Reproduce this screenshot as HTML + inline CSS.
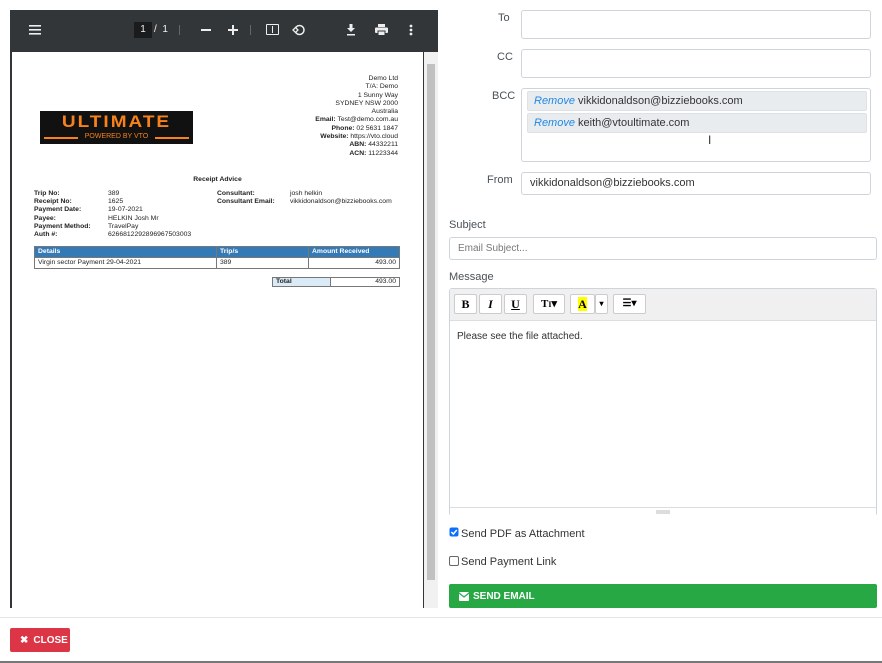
<!DOCTYPE html>
<html><head><style>
*{box-sizing:border-box;margin:0;padding:0}
body{width:882px;height:663px;background:#fff;font-family:"Liberation Sans",sans-serif;position:relative;overflow:hidden;color:#495057}
.a{position:absolute}
.pdf{left:10px;top:10px;width:428px;height:598px;background:#323639}
.tb{left:0;top:0;width:428px;height:42px;background:#323639;color:#f1f1f1}
.page{left:2px;top:42px;width:411px;height:556px;background:#fff;color:#222;font-size:6.8px;line-height:8.2px}
.sb{left:414px;top:42px;width:14px;height:556px;background:#f1f1f1}
.lbl{font-size:11px;color:#495057}
.inp{border:1px solid #ced4da;border-radius:3px;background:#fff}
.tag{left:5px;width:340px;height:20px;background:#e9ecef;border:1px solid #dee2e6;border-radius:2px;font-size:11px;color:#333;line-height:18px;padding-left:6px}
.tag i{color:#1e88e5}
.btn{border:1px solid #ccc;background:#fff;border-radius:2px;height:20px;top:5px;font-size:12px;text-align:center;line-height:18px;color:#000;font-family:"Liberation Serif",serif;font-weight:bold}
td{border:1px solid #777;padding:0 3px}
table{border-collapse:collapse}
.fb{display:flex;align-items:center;color:#fff;font-size:10px;font-weight:bold;border-radius:2px}
</style></head><body>
<div class="a pdf">
 <div class="a tb">
  <svg class="a" style="left:19px;top:15px" width="12" height="10"><rect y="0" width="12" height="1.6" fill="#eee"/><rect y="4" width="12" height="1.6" fill="#eee"/><rect y="8" width="12" height="1.6" fill="#eee"/></svg>
  <div class="a" style="left:124px;top:12px;width:18px;height:16px;background:#191b1c;font-size:10px;line-height:16px;text-align:center">1</div>
  <div class="a" style="left:144px;top:12px;font-size:10px;line-height:16px">/ &nbsp;1</div>
  <div class="a" style="left:169px;top:15px;width:1px;height:10px;background:#666"></div>
  <div class="a" style="left:191px;top:19px;width:10px;height:1.6px;background:#eee"></div>
  <div class="a" style="left:218px;top:19px;width:10px;height:1.6px;background:#eee"></div>
  <div class="a" style="left:222.2px;top:15px;width:1.6px;height:10px;background:#eee"></div>
  <div class="a" style="left:240px;top:15px;width:1px;height:10px;background:#666"></div>
  <div class="a" style="left:256px;top:14px;width:13px;height:11px;border:1.5px solid #eee;border-radius:1px"></div>
  <div class="a" style="left:261.7px;top:16px;width:1.6px;height:7px;background:#eee"></div>
  <svg class="a" style="left:282px;top:13px" width="14" height="14"><circle cx="7.5" cy="7" r="4.5" fill="none" stroke="#eee" stroke-width="1.5"/><rect x="1" y="5" width="4" height="4" fill="#323639" transform="rotate(45 3 7)"/><path d="M1 7 L3.5 4.5 L6 7 L3.5 9.5Z" fill="none" stroke="#eee" stroke-width="1.3"/></svg>
  <svg class="a" style="left:336px;top:13px" width="10" height="13"><path d="M3.5 1h3v4h2.5L5 9 1 5h2.5z M1 11h8v1.5H1z" fill="#eee"/></svg>
  <svg class="a" style="left:365px;top:14px" width="13" height="12"><rect x="3" y="0" width="7" height="3" fill="#eee"/><rect x="0" y="3.5" width="13" height="5.5" rx="1" fill="#eee"/><rect x="3" y="7" width="7" height="4.5" fill="#eee" stroke="#323639" stroke-width="1"/></svg>
  <svg class="a" style="left:399px;top:14px" width="4" height="12"><circle cx="2" cy="2" r="1.4" fill="#eee"/><circle cx="2" cy="6" r="1.4" fill="#eee"/><circle cx="2" cy="10" r="1.4" fill="#eee"/></svg>
 </div>
 <div class="a page">
  <div class="a" style="left:28px;top:59px;width:153px;height:33px;background:#111">
   <div class="a" style="left:3px;top:3px;width:147px;height:17px;font-size:19px;line-height:17px;font-weight:bold;color:#f7821b;letter-spacing:2px;text-align:center;transform:scaleY(0.85)">ULTIMATE</div>
   <div class="a" style="left:4px;top:26px;width:145px;height:1.5px;background:#f7821b"></div>
   <div class="a" style="left:38px;top:22px;width:77px;background:#111;font-size:7px;line-height:8px;color:#f7821b;text-align:center">POWERED BY VTO</div>
  </div>
  <div class="a" style="right:25px;top:23px;text-align:right;line-height:8.3px">Demo Ltd<br>T/A: Demo<br>1 Sunny Way<br>SYDNEY NSW 2000<br>Australia<br><b>Email:</b> Test@demo.com.au<br><b>Phone:</b> 02 5631 1847<br><b>Website:</b> https://vto.cloud<br><b>ABN:</b> 44332211<br><b>ACN:</b> 11223344</div>
  <div class="a" style="left:0;width:411px;top:124px;text-align:center;font-weight:bold">Receipt Advice</div>
  <div class="a" style="left:22px;top:138px;font-weight:bold">Trip No:<br>Receipt No:<br>Payment Date:<br>Payee:<br>Payment Method:<br>Auth #:</div>
  <div class="a" style="left:96px;top:138px">389<br>1625<br>19-07-2021<br>HELKIN Josh Mr<br>TravelPay<br>6266812292896967503003</div>
  <div class="a" style="left:205px;top:138px;font-weight:bold">Consultant:<br>Consultant Email:</div>
  <div class="a" style="left:278px;top:138px">josh helkin<br>vikkidonaldson@bizziebooks.com</div>
  <table class="a" style="left:22px;top:194px;width:366px;line-height:10px">
   <tr style="background:#337ab7;color:#fff;font-weight:bold"><td style="width:182px">Details</td><td style="width:92px">Trip/s</td><td>Amount Received</td></tr>
   <tr><td>Virgin sector Payment 29-04-2021</td><td>389</td><td style="text-align:right">493.00</td></tr>
  </table>
  <table class="a" style="left:260px;top:225px;width:128px;line-height:8px">
   <tr><td style="background:#dbeaf7;font-weight:bold;width:58px">Total</td><td style="text-align:right">493.00</td></tr>
  </table>
 </div>
 <div class="a sb"><div class="a" style="left:3px;top:12px;width:8px;height:516px;background:#c1c1c1"></div></div>
</div>

<div class="a lbl" style="left:498px;top:12px">To</div>
<div class="a inp" style="left:521px;top:10px;width:350px;height:29px"></div>
<div class="a lbl" style="left:497px;top:51px">CC</div>
<div class="a inp" style="left:521px;top:49px;width:350px;height:29px"></div>
<div class="a lbl" style="left:492px;top:90px">BCC</div>
<div class="a inp" style="left:521px;top:88px;width:350px;height:74px">
 <div class="a tag" style="top:2px">
  <i>Remove</i> vikkidonaldson@bizziebooks.com</div>
 <div class="a tag" style="top:24px"><i>Remove</i> keith@vtoultimate.com</div>
 <div class="a" style="left:186px;top:44px;font-size:12px;color:#333">I</div>
</div>
<div class="a lbl" style="left:487px;top:174px">From</div>
<div class="a inp" style="left:521px;top:172px;width:350px;height:23px;font-size:11px;color:#333;line-height:21px;padding-left:8px">vikkidonaldson@bizziebooks.com</div>

<div class="a lbl" style="left:449px;top:219px">Subject</div>
<div class="a inp" style="left:449px;top:237px;width:428px;height:23px;font-size:10px;color:#777;line-height:21px;padding-left:8px">Email Subject...</div>
<div class="a lbl" style="left:449px;top:271px">Message</div>
<div class="a inp" style="left:449px;top:288px;width:428px;height:228px;background:#fff">
 <div class="a" style="left:0;top:0;width:426px;height:32px;background:#f0f0f0;border-bottom:1px solid #ddd"></div>
 <div class="a btn" style="left:4px;width:23px">B</div>
 <div class="a btn" style="left:29px;width:23px;font-style:italic">I</div>
 <div class="a btn" style="left:54px;width:23px;text-decoration:underline">U</div>
 <div class="a btn" style="left:83px;width:32px;font-size:11px">T<span style="font-size:8px">I</span>▾</div>
 <div class="a btn" style="left:120px;width:25px"><span style="background:#ff0">A</span></div>
 <div class="a btn" style="left:145px;width:13px;font-size:8px">▾</div>
 <div class="a btn" style="left:163px;width:33px;font-size:10px">☰▾</div>
 <div class="a" style="left:7px;top:42px;font-size:10px;color:#333">Please see the file attached.</div>
 <div class="a" style="left:0;top:218px;width:426px;height:9px;border-top:1px solid #ddd;background:#fff"><div class="a" style="left:206px;top:2px;width:14px;height:4px;background:#ddd"></div></div>
</div>
<svg class="a" style="left:449px;top:527px" width="10" height="10"><rect x=".5" y=".5" width="9" height="9" rx="2" fill="#0d6efd"/><path d="M2.3 5l2 2 3.5-4" fill="none" stroke="#fff" stroke-width="1.5"/></svg>
<div class="a lbl" style="left:461px;top:528px;color:#333">Send PDF as Attachment</div>
<div class="a" style="left:449px;top:556px;width:10px;height:10px;border:1px solid #666;border-radius:2px"></div>
<div class="a lbl" style="left:461px;top:556px;color:#333">Send Payment Link</div>
<div class="a fb" style="left:449px;top:584px;width:428px;height:24px;background:#28a745;padding-left:10px">
<svg width="10" height="9" style="margin-right:4px"><rect width="10" height="9" rx="1" fill="#fff"/><path d="M0 1l5 4 5-4" fill="none" stroke="#28a745" stroke-width="1.2"/></svg>SEND EMAIL</div>
<div class="a" style="left:0;top:617px;width:882px;height:1px;background:#e5e5e5"></div>
<div class="a fb" style="left:10px;top:628px;width:60px;height:24px;background:#dc3545;padding-left:10px"><span style="margin-right:5px">✖</span>CLOSE</div>
<div class="a" style="left:0;top:661px;width:882px;height:2px;background:#777"></div>
</body></html>
